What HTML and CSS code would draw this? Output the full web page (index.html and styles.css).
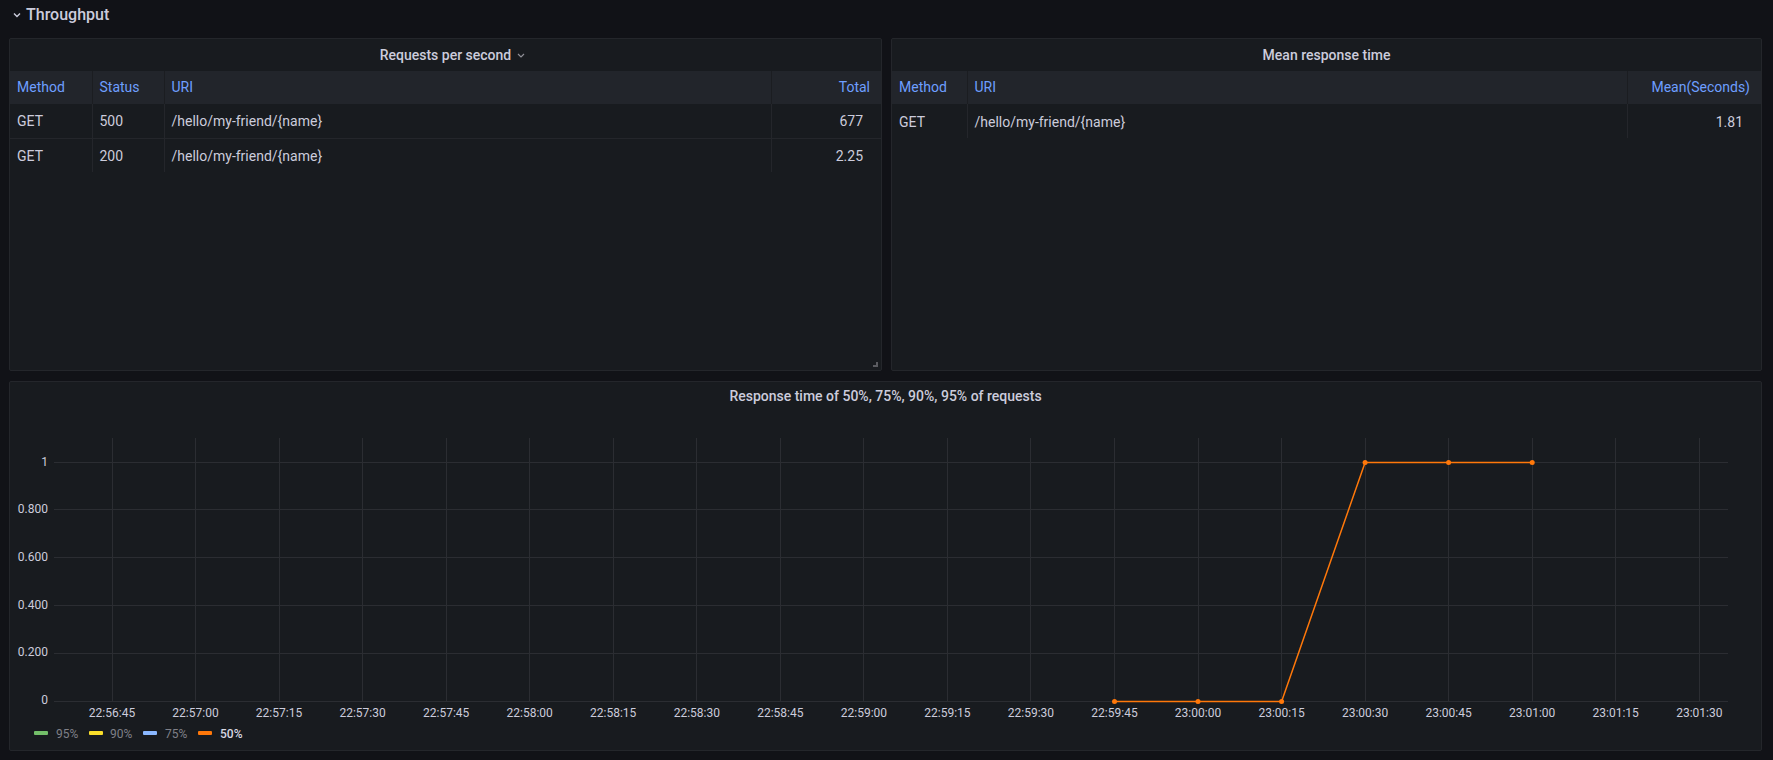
FILE: index.html
```html
<!DOCTYPE html>
<html lang="en">
<head>
<meta charset="utf-8">
<title>Throughput</title>
<link rel="stylesheet" href="styles.css">
</head>
<body>
<div class="page">
  <div class="row-title">
    <svg class="row-chevron" width="8" height="6" viewBox="0 0 8 6"><polyline points="1,1.5 4,4.5 7,1.5" fill="none" stroke="#ccccdc" stroke-width="1.4"/></svg>
    <span>Throughput</span>
  </div>

  <div class="top-grid">
    <section class="panel">
      <header class="panel-header with-menu">
        <span class="panel-title">Requests per second</span>
        <svg class="title-chevron" width="8" height="5" viewBox="0 0 8 5"><polyline points="1,1 4,4 7,1" fill="none" stroke="#8e8e96" stroke-width="1.2"/></svg>
      </header>
      <table class="data-table">
        <colgroup>
          <col class="c-method1"><col class="c-status"><col><col class="c-total">
        </colgroup>
        <thead>
          <tr><th>Method</th><th>Status</th><th>URI</th><th class="num">Total</th></tr>
        </thead>
        <tbody>
          <tr><td>GET</td><td>500</td><td>/hello/my-friend/{name}</td><td class="num">677</td></tr>
          <tr><td>GET</td><td>200</td><td>/hello/my-friend/{name}</td><td class="num">2.25</td></tr>
        </tbody>
      </table>
      <div class="resize-handle"></div>
    </section>

    <section class="panel">
      <header class="panel-header">
        <span class="panel-title">Mean response time</span>
      </header>
      <table class="data-table">
        <colgroup>
          <col class="c-method2"><col><col class="c-mean">
        </colgroup>
        <thead>
          <tr><th>Method</th><th>URI</th><th class="num">Mean(Seconds)</th></tr>
        </thead>
        <tbody>
          <tr><td>GET</td><td>/hello/my-friend/{name}</td><td class="num">1.81</td></tr>
        </tbody>
      </table>
    </section>
  </div>

  <section class="panel chart-panel">
    <header class="chart-header">
      <span class="panel-title">Response time of 50%, 75%, 90%, 95% of requests</span>
    </header>
    <svg class="chart" width="1751" height="340" viewBox="10 410 1751 340">
      <g class="grid" stroke="#2b2d32" stroke-width="1">
        <line x1="54" y1="462.5" x2="1728" y2="462.5"/>
        <line x1="54" y1="509.5" x2="1728" y2="509.5"/>
        <line x1="54" y1="557.5" x2="1728" y2="557.5"/>
        <line x1="54" y1="605.5" x2="1728" y2="605.5"/>
        <line x1="54" y1="653.5" x2="1728" y2="653.5"/>
        <line x1="54" y1="701.5" x2="1728" y2="701.5"/>
        <line x1="112.5" y1="438" x2="112.5" y2="702"/>
        <line x1="195.5" y1="438" x2="195.5" y2="702"/>
        <line x1="279.5" y1="438" x2="279.5" y2="702"/>
        <line x1="362.5" y1="438" x2="362.5" y2="702"/>
        <line x1="446.5" y1="438" x2="446.5" y2="702"/>
        <line x1="529.5" y1="438" x2="529.5" y2="702"/>
        <line x1="613.5" y1="438" x2="613.5" y2="702"/>
        <line x1="696.5" y1="438" x2="696.5" y2="702"/>
        <line x1="780.5" y1="438" x2="780.5" y2="702"/>
        <line x1="863.5" y1="438" x2="863.5" y2="702"/>
        <line x1="947.5" y1="438" x2="947.5" y2="702"/>
        <line x1="1030.5" y1="438" x2="1030.5" y2="702"/>
        <line x1="1114.5" y1="438" x2="1114.5" y2="702"/>
        <line x1="1198.5" y1="438" x2="1198.5" y2="702"/>
        <line x1="1281.5" y1="438" x2="1281.5" y2="702"/>
        <line x1="1365.5" y1="438" x2="1365.5" y2="702"/>
        <line x1="1448.5" y1="438" x2="1448.5" y2="702"/>
        <line x1="1532.5" y1="438" x2="1532.5" y2="702"/>
        <line x1="1615.5" y1="438" x2="1615.5" y2="702"/>
        <line x1="1699.5" y1="438" x2="1699.5" y2="702"/>
      </g>
      <g class="axis-y" text-anchor="end">
        <text x="48" y="466">1</text>
        <text x="48" y="513">0.800</text>
        <text x="48" y="561">0.600</text>
        <text x="48" y="609">0.400</text>
        <text x="48" y="656">0.200</text>
        <text x="48" y="704">0</text>
      </g>
      <g class="axis-x" text-anchor="middle">
        <text x="112" y="717">22:56:45</text>
        <text x="195.5" y="717">22:57:00</text>
        <text x="279" y="717">22:57:15</text>
        <text x="362.6" y="717">22:57:30</text>
        <text x="446.2" y="717">22:57:45</text>
        <text x="529.7" y="717">22:58:00</text>
        <text x="613.2" y="717">22:58:15</text>
        <text x="696.8" y="717">22:58:30</text>
        <text x="780.3" y="717">22:58:45</text>
        <text x="863.9" y="717">22:59:00</text>
        <text x="947.4" y="717">22:59:15</text>
        <text x="1030.9" y="717">22:59:30</text>
        <text x="1114.5" y="717">22:59:45</text>
        <text x="1198" y="717">23:00:00</text>
        <text x="1281.6" y="717">23:00:15</text>
        <text x="1365.1" y="717">23:00:30</text>
        <text x="1448.6" y="717">23:00:45</text>
        <text x="1532.2" y="717">23:01:00</text>
        <text x="1615.7" y="717">23:01:15</text>
        <text x="1699.3" y="717">23:01:30</text>
      </g>
      <polyline class="series" points="1114.5,701.5 1198,701.5 1281.6,701.5 1365.1,462.5 1448.6,462.5 1532.2,462.5" fill="none" stroke="#ff780a" stroke-width="1.5" stroke-linejoin="round"/>
      <g fill="#ff780a">
        <circle cx="1114.5" cy="701.5" r="2.5"/>
        <circle cx="1198" cy="701.5" r="2.5"/>
        <circle cx="1281.6" cy="701.5" r="2.5"/>
        <circle cx="1365.1" cy="462.5" r="2.5"/>
        <circle cx="1448.6" cy="462.5" r="2.5"/>
        <circle cx="1532.2" cy="462.5" r="2.5"/>
      </g>
      <g class="legend">
        <rect x="34" y="731" width="14" height="4" rx="1" fill="#73bf69"/>
        <text x="56" y="737.5" class="legend-off">95%</text>
        <rect x="89" y="731" width="14" height="4" rx="1" fill="#fade2a"/>
        <text x="110" y="737.5" class="legend-off">90%</text>
        <rect x="143" y="731" width="14" height="4" rx="1" fill="#8ab8ff"/>
        <text x="165" y="737.5" class="legend-off">75%</text>
        <rect x="198" y="731" width="14" height="4" rx="1" fill="#ff780a"/>
        <text x="220" y="737.5" class="legend-on">50%</text>
      </g>
    </svg>
  </section>
</div>
</body>
</html>
```

FILE: styles.css
```css
* { box-sizing: border-box; }

html, body {
  margin: 0;
  padding: 0;
  background: #111217;
  color: #ccccdc;
  font-family: Roboto, "Liberation Sans", Arial, sans-serif;
}

.page {
  width: 1773px;
  height: 760px;
  padding: 0 11px 0 9px;
  overflow: hidden;
}

.row-title {
  height: 28px;
  display: flex;
  align-items: center;
  gap: 5px;
  padding-left: 4px;
  margin-bottom: 10px;
  font-size: 16px;
  font-weight: 500;
  color: #ccccdc;
}

.row-chevron { display: block; margin-top: 2px; }

.top-grid {
  display: grid;
  grid-template-columns: 873px 871px;
  gap: 9px;
  height: 333px;
}

.panel {
  position: relative;
  background: #181b1f;
  border: 1px solid #24262b;
  border-radius: 2px;
  overflow: hidden;
}

.panel-header {
  height: 32px;
  display: flex;
  align-items: center;
  justify-content: center;
  gap: 6px;
  padding-bottom: 1px;
}

.panel-header.with-menu { padding-left: 14px; }

.panel-title {
  font-size: 14px;
  font-weight: 500;
  color: #ccccdc;
}

.title-chevron { display: block; margin-top: 2px; }

.data-table {
  width: 100%;
  border-collapse: collapse;
  table-layout: fixed;
  font-size: 14px;
}

.c-method1 { width: 82px; }
.c-status { width: 72px; }
.c-total { width: 110px; }
.c-method2 { width: 75px; }
.c-mean { width: 134px; }

.data-table th {
  height: 33px;
  background: #22252b;
  color: #6e9fff;
  font-weight: 400;
  text-align: left;
  padding: 0 7px 1px;
  border-right: 1px solid #1b1d21;
}

.data-table td {
  height: 34px;
  padding: 1px 7px 0;
  color: #ccccdc;
  border-right: 1px solid #24262b;
}

.data-table tbody tr:not(:last-child) td {
  border-bottom: 1px solid #24262b;
}

.data-table th:last-child,
.data-table td:last-child { border-right: none; }

.data-table th.num { text-align: right; padding-right: 11px; }
.data-table td.num { text-align: right; padding-right: 18px; }

.resize-handle {
  position: absolute;
  right: 3px;
  bottom: 3px;
  width: 5px;
  height: 5px;
  border-right: 2px solid #5a5b60;
  border-bottom: 2px solid #5a5b60;
}

.chart-panel {
  margin-top: 10px;
  width: 1753px;
  height: 370px;
}

.chart-header {
  height: 28px;
  display: flex;
  align-items: center;
  justify-content: center;
}

.chart { display: block; }

.chart text {
  font-family: Roboto, "Liberation Sans", Arial, sans-serif;
  font-size: 12px;
  fill: #ccccdc;
}

.chart .legend-off { fill: #7f8088; }
.chart .legend-on { fill: #d8d9e3; font-weight: 500; }
```
